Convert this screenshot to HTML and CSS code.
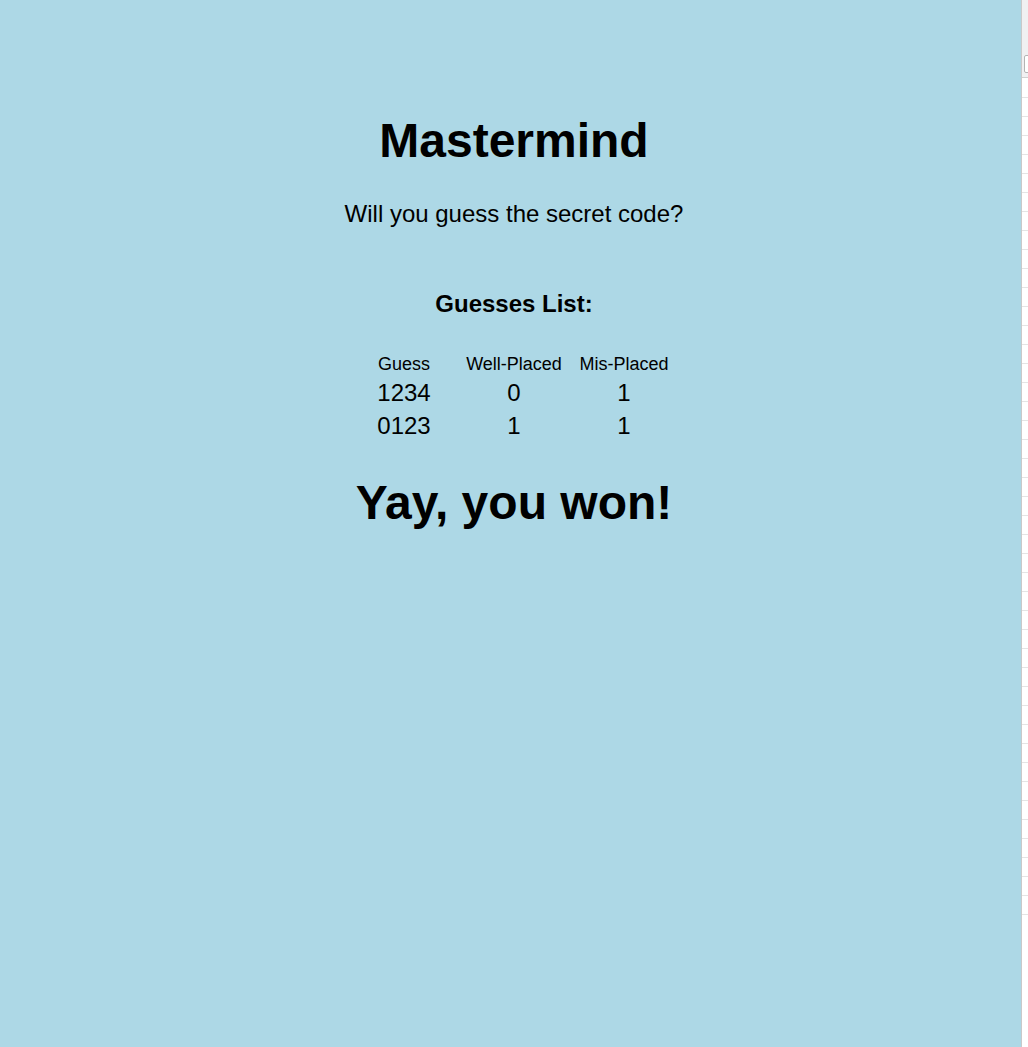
FILE: index.html
```html
<!DOCTYPE html>
<html lang="en">
<head>
<meta charset="utf-8">
<title>Mastermind</title>
<link rel="stylesheet" href="styles.css">
</head>
<body>
<main class="game">
  <h1 class="title">Mastermind</h1>
  <p class="subtitle">Will you guess the secret code?</p>
  <h2 class="list-title">Guesses List:</h2>
  <table class="guesses">
    <thead>
      <tr><th>Guess</th><th>Well-Placed</th><th>Mis-Placed</th></tr>
    </thead>
    <tbody>
      <tr><td>1234</td><td>0</td><td>1</td></tr>
      <tr><td>0123</td><td>1</td><td>1</td></tr>
    </tbody>
  </table>
  <h1 class="result">Yay, you won!</h1>
</main>
<aside class="side-panel">
  <div class="side-top"><div class="side-box"></div></div>
  <div class="side-rows"></div>
</aside>
</body>
</html>
```
FILE: styles.css
```css
html, body {
  margin: 0;
  padding: 0;
  height: 100%;
}
body {
  background: #add8e6;
  font-family: "Liberation Sans", Arial, Helvetica, sans-serif;
  color: #000;
  overflow: hidden;
}
.game {
  display: flex;
  flex-direction: column;
  align-items: center;
  padding-top: 113px;
}
.title, .result {
  font-size: 48px;
  font-weight: bold;
  line-height: 56px;
  margin: 0;
}
.subtitle {
  font-size: 24px;
  line-height: 28px;
  margin: 31px 0 0;
}
.list-title {
  font-size: 24px;
  font-weight: bold;
  line-height: 28px;
  margin: 62px 0 0;
}
.guesses {
  margin-top: 33px;
  border-spacing: 2px;
}
.guesses th {
  font-weight: normal;
  font-size: 18px;
  line-height: 20px;
  padding: 1px;
  width: 106px;
  text-align: center;
}
.guesses td {
  font-size: 24px;
  line-height: 29px;
  padding: 1px;
  text-align: center;
}
.result {
  margin-top: 32px;
}
.side-panel {
  position: fixed;
  top: 0;
  left: 1021px;
  width: 7px;
  height: 1047px;
  border-left: 1px solid #c9c9c9;
  background: #fff;
  display: flex;
  flex-direction: column;
}
.side-top {
  height: 77px;
  background: #f0f0f2;
  border-bottom: 1px solid #cfcfcf;
  position: relative;
}
.side-box {
  position: absolute;
  left: 2px;
  top: 55px;
  width: 20px;
  height: 16px;
  border: 1px solid #b4b4b4;
  border-radius: 2px;
  background: #fff;
}
.side-rows {
  height: 845px;
  background: repeating-linear-gradient(to bottom, #fff 0, #fff 18px, #e4e4e4 18px, #e4e4e4 19px);
  background-position: 0 1px;
}
```
